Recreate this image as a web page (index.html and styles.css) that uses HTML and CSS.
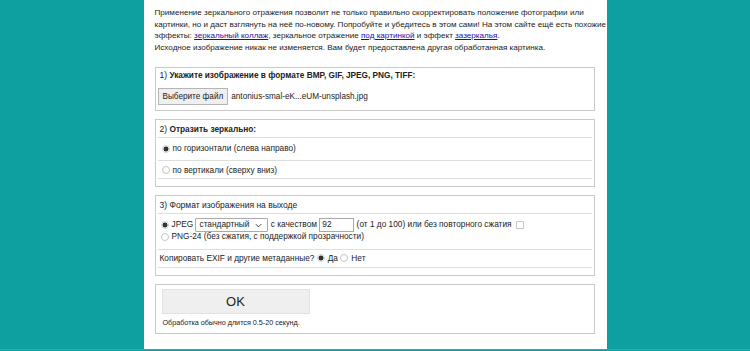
FILE: index.html
```html
<!DOCTYPE html>
<html lang="ru">
<head>
<meta charset="utf-8">
<title>Зеркальное отражение</title>
<link rel="stylesheet" href="styles.css">
</head>
<body>
<div class="page">
  <p class="intro">Применение зеркального отражения позволит не только правильно скорректировать положение фотографии или<br>картинки, но и даст взглянуть на неё по-новому. Попробуйте и убедитесь в этом сами! На этом сайте ещё есть похожие<br>эффекты: <a href="#">зеркальный коллаж</a>, зеркальное отражение <a href="#">под картинкой</a> и эффект <a href="#">зазеркалья</a>.</p>
  <p class="intro intro-last">Исходное изображение никак не изменяется. Вам будет предоставлена другая обработанная картинка.</p>

  <div class="box box-file">
    <div class="box-title">1) <b>Укажите изображение в формате BMP, GIF, JPEG, PNG, TIFF:</b></div>
    <div class="file-row">
      <span class="file-btn">Выберите файл</span>
      <span class="file-name">antonius-smal-eK...eUM-unsplash.jpg</span>
    </div>
  </div>

  <div class="box box-rows">
    <div class="row row-title">2) <b>Отразить зеркально:</b></div>
    <div class="row row-opt1"><span class="radio on"></span>по горизонтали (слева направо)</div>
    <div class="row row-opt2"><span class="radio"></span>по вертикали (сверху вниз)</div>
  </div>

  <div class="box box-rows">
    <div class="row row-title">3) Формат изображения на выходе</div>
    <div class="row row-format">
      <div class="line"><span class="radio on"></span>JPEG <span class="select">стандартный<svg class="chev" viewBox="0 0 8 5" width="7" height="5"><path d="M1 1l3 3 3-3" fill="none" stroke="#333" stroke-width="1.1"/></svg></span> с качеством <span class="input">92</span> (от 1 до 100) или без повторного сжатия <span class="check"></span></div>
      <div class="line"><span class="radio"></span>PNG-24 (без сжатия, с поддержкой прозрачности)</div>
    </div>
    <div class="row row-exif">Копировать EXIF и другие метаданные? <span class="radio on"></span>Да <span class="radio"></span>Нет</div>
  </div>

  <div class="box box-submit">
    <div class="ok-btn">OK</div>
    <div class="note">Обработка обычно длится 0.5-20 секунд.</div>
  </div>
</div>
<div class="rule"></div>
</body>
</html>
```

FILE: styles.css
```css
html, body {
  margin: 0;
  padding: 0;
  background: #0e9fa0;
}
body {
  font-family: "Liberation Sans", Arial, sans-serif;
  font-size: 8.5px;
  color: #222;
}
.page {
  width: 440px;
  margin: 0 auto;
  padding: 7px 12px 0 11px;
  height: 342px;
  background: #fff;
}
.intro {
  margin: 0;
  line-height: 11.5px;
  font-size: 8.1px;
  white-space: nowrap;
}
.intro-last {
  margin-top: 0.5px;
  margin-bottom: 13px;
}
.intro a {
  color: #1a0dab;
  text-decoration: underline;
}
.box {
  border: 1px solid #c9c9c9;
  margin-bottom: 8px;
}
.box-file {
  padding: 2px 4px 5px 4px;
}
.box-title {
  line-height: 11.5px;
}
.box-title b {
  font-size: 8.25px;
}
.file-row {
  margin-top: 7px;
  display: flex;
  align-items: center;
  height: 17px;
}
.file-btn {
  display: inline-flex;
  align-items: center;
  height: 15px;
  padding: 0 4px;
  border: 1px solid #b5b5b5;
  background: #efefef;
  color: #222;
  margin-left: -2px;
  font-size: 8.2px;
}
.file-name {
  margin-left: 3px;
  font-size: 8.2px;
}
.box-rows {
  padding: 0 2px 7px;
}
.row {
  border-bottom: 1px solid #dedede;
  padding: 0 2px;
  line-height: 11.5px;
}
.row-title {
  padding-top: 4px;
  padding-bottom: 1.5px;
}
.row-title b {
  font-size: 8.3px;
}
.row-opt1 {
  padding-top: 5px;
  padding-bottom: 5px;
  display: flex;
  align-items: center;
  padding-left: 4px;
  font-size: 8.3px;
}
.row-opt2 {
  padding-top: 4px;
  padding-bottom: 2px;
  display: flex;
  align-items: center;
  padding-left: 4px;
  font-size: 8.3px;
}
.radio {
  display: inline-block;
  width: 6px;
  height: 6px;
  border: 1px solid #c4c4c4;
  border-radius: 50%;
  margin-right: 3px;
  flex: none;
}
.radio.on {
  border-color: #d0d0d0;
  background: radial-gradient(circle, #333 0, #333 2.2px, #fff 2.8px);
}
.row-format {
  padding-top: 4px;
  padding-bottom: 6px;
  padding-left: 3px;
  font-size: 8.3px;
}
.line {
  display: flex;
  align-items: center;
  height: 11.5px;
  white-space: pre;
}
.row-format .line:first-child {
  height: 14px;
  margin-bottom: -1px;
}
.select {
  display: inline-flex;
  align-items: center;
  justify-content: space-between;
  width: 65px;
  height: 12px;
  padding: 0 3px;
  border: 1px solid #aaa;
  border-radius: 1px;
}
.chev {
  margin-right: 2px;
}
.input {
  display: inline-flex;
  align-items: center;
  width: 29px;
  height: 12px;
  padding: 0 2px;
  border: 1px solid #aaa;
}
.check {
  display: inline-block;
  width: 6px;
  height: 6px;
  border: 1px solid #c4c4c4;
  border-radius: 1px;
  margin-left: 2px;
}
.row-exif {
  padding-top: 3px;
  padding-bottom: 3px;
  display: flex;
  align-items: center;
  white-space: pre;
  font-size: 8.3px;
}
.box-submit {
  padding: 4px 6px 5px 6px;
}
.ok-btn {
  width: 146px;
  height: 23px;
  background: #efefef;
  border: 1px solid #e2e2e2;
  display: flex;
  align-items: center;
  justify-content: center;
  font-size: 13px;
  color: #222;
}
.note {
  font-size: 7.2px;
  margin-top: 4px;
  line-height: 10px;
  padding-left: 1px;
}
.rule {
  height: 1px;
  background: #6a8f8f;
}
```
